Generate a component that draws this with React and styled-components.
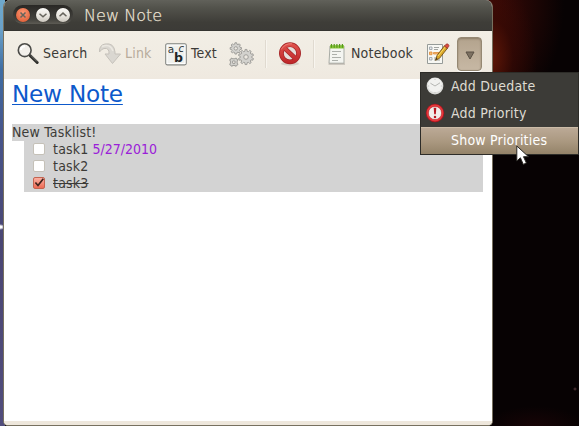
import React from 'react';
import styled, { createGlobalStyle, css } from 'styled-components';

const Global = createGlobalStyle`
  * { box-sizing: border-box; }
  body {
    margin: 0;
    overflow: hidden;
    font-family: "DejaVu Sans Condensed", "DejaVu Sans", sans-serif;
    font-stretch: 90%;
    font-size: 14px;
    letter-spacing: 0.2px;
    color: #3c3b37;
  }
`;

const Desktop = styled.div`
  position: relative;
  width: 579px;
  height: 426px;
  overflow: hidden;
  padding-left: 3px;
  background:
    radial-gradient(ellipse 5px 3px at 0 227px, #fff 0 35%, transparent),
    radial-gradient(circle 2px at 575px 389px, #5c3c40, transparent),
    linear-gradient(#6fa9cc, #6aa0c8 30px, #3f6da3 70px, #47568c 130px, #4a4673 240px, #514d7c) 0 0 / 5px 426px no-repeat,
    radial-gradient(ellipse 48px 80px at 489px 58px, #641807, rgba(60, 10, 4, 0.55) 50%, transparent),
    radial-gradient(ellipse 72px 110px at 492px 5px, #3d0a06, rgba(40, 7, 5, 0.8) 50%, transparent),
    radial-gradient(ellipse 50px 20px at 535px 426px, #170406, transparent),
    #070203;
`;

const Window = styled.div`
  width: 490px;
  height: 426px;
  display: flex;
  flex-direction: column;
  border: solid #77705f;
  border-width: 0 1px 1px;
  border-radius: 7px 7px 5px 5px;
  overflow: hidden;
  background: #f0ebe2;
`;

const TitleBar = styled.header`
  flex: 0 0 31px;
  display: flex;
  align-items: center;
  gap: 11px;
  padding: 0 0 1px 9px;
  background: linear-gradient(#61615a, #53534c 25%, #3e3d38 75%, #3c3b37);
  border-bottom: 1px solid #353430;
`;

const WindowButtons = styled.div`
  display: flex;
  align-items: center;
  gap: 6px;
  width: 60px;
  height: 19px;
  padding: 0 3px;
  border-radius: 10px;
  background: linear-gradient(#292825, #44433e 75%, #5d5b54);
`;

const RoundButton = styled.button`
  width: 14px;
  height: 14px;
  flex: none;
  padding: 0;
  border: 0;
  border-radius: 50%;
  display: grid;
  place-items: center;
  background: ${p => p.$close ? 'radial-gradient(circle at 50% 35%, #ff9875, #e66c45 65%, #d6532c)' : 'linear-gradient(#fbfaf7, #e6e3dc 60%, #cbc7be)'};
  box-shadow: 0 0 1px #151410;
`;

const WindowTitle = styled.div`
  font: 300 16px/24px "DejaVu Sans Light", "DejaVu Sans", sans-serif;
  font-stretch: 100%;
  letter-spacing: 0.05px;
  color: #f1ebdc;
  padding-top: 3px;
  -webkit-text-stroke: 0.25px #e3dccb;
`;

const Toolbar = styled.nav`
  flex: 0 0 48px;
  display: flex;
  align-items: center;
  padding-bottom: 2px;
  background: linear-gradient(#f2eee5, #f0ebe2 70%, #efe9e0);
`;

const Tool = styled.div`
  flex: 0 0 ${p => p.$width}px;
  display: flex;
  align-items: center;
  gap: ${p => p.$gap || 4}px;
  white-space: nowrap;
  color: ${p => p.$disabled ? '#b7ab9b' : '#3c3b37'};
  svg { flex: none; }
`;

const ToolLabel = styled.span`
  padding-bottom: 2px;
`;

const IconInset = styled.span`
  display: flex;
  margin-left: ${p => p.$left || 12}px;
`;

const Separator = styled.div`
  flex: 0 0 2px;
  height: 28px;
  border-left: 1px solid #e0dad0;
  border-right: 1px solid #f8f5ef;
`;

const DropButton = styled.button`
  flex: 0 0 25px;
  height: 34px;
  padding: 2px 0 0 1px;
  border: 1px solid #958873;
  border-radius: 4px;
  display: grid;
  place-items: center;
  background: linear-gradient(#b3a38d, #c5b6a2 90%);
  box-shadow: inset 0 1px 2px #8c7d68, 0 1px #fff;
`;

const Editor = styled.main`
  flex: 1;
  background: #fff;
  padding: 0 8px;
`;

const BottomEdge = styled.footer`
  flex: 0 0 4px;
  background: #eee7dc;
`;

const Heading = styled.h1`
  width: max-content;
  height: 45px;
  margin: 0;
  font-family: "DejaVu Sans", sans-serif;
  font-stretch: 100%;
  font-weight: 400;
  font-size: 23.2px;
  letter-spacing: -0.25px;
  line-height: 29px;
  color: #0d59cb;
  text-decoration: underline;
  text-decoration-thickness: 1px;
  text-underline-offset: 2px;
  text-decoration-skip-ink: none;
`;

const ListTitle = styled.div`
  width: 471px;
  height: 17px;
  line-height: 16px;
  background: #d3d3d3;
`;

const TaskList = styled.ul`
  list-style: none;
  margin: 0 0 0 12px;
  padding: 0;
  width: 459px;
  background: #d3d3d3;
`;

const Task = styled.li`
  display: flex;
  align-items: center;
  height: 17px;
  padding-left: 9px;
  line-height: 17px;
`;

const Check = styled.div`
  width: 12px;
  height: 12px;
  margin: -2px 8px 0 0;
  border: 1px solid ${p => p.$checked ? '#c46450' : '#c5c1b8'};
  border-radius: 2px;
  background: ${p => p.$checked ? 'linear-gradient(#fbb0a2, #ee6b55)' : '#fff'};
  svg { display: block; overflow: visible; }
`;

const TaskText = styled.span`
  text-decoration: ${p => p.$done ? 'line-through' : 'none'};
`;

const DueDate = styled.span`
  margin-left: 4px;
  color: #9a20d8;
  letter-spacing: 0;
`;

const Menu = styled.div`
  position: absolute;
  left: 420px;
  top: 72px;
  width: 159px;
  height: 83px;
  border: 1px solid #2d2c28;
  background: #3c3b37;
`;

const MenuItem = styled.div`
  height: 27px;
  display: grid;
  grid-template-columns: 30px 1fr;
  align-items: center;
  line-height: 18px;
  padding-bottom: 1px;
  color: #dfdbd2;
  svg { margin-left: 4px; }
  ${p => p.$active && css`
    color: #fff;
    background: linear-gradient(#bba996, #ab9981 50%, #948369);
    border-top: 1px solid #cbbba7;
    padding-bottom: 2px;
  `}
`;

const Pointer = styled.svg`
  position: absolute;
  left: 516px;
  top: 145px;
`;

const SearchIcon = () => (
  <svg width="24" height="24" viewBox="0 0 24 24">
    <path d="M14 13.5L21.2 20.5" stroke="#30302d" strokeWidth="3" strokeLinecap="round" />
    <path d="M15 13.5L21 19.5" stroke="#898984" strokeWidth=".8" />
    <circle cx="8.7" cy="8.2" r="6.4" fill="#f2efea" stroke="#4b4b48" strokeWidth="1.6" />
    <path d="M5 8Q5 4.5 9 4.2" fill="none" stroke="#fff" strokeWidth="2" />
  </svg>
);

const LinkIcon = () => (
  <svg width="24" height="24" viewBox="0 0 24 24">
    <path d="M1.5 10Q1 3 7 2Q16 .5 17 10L17 12H22.5L14.5 21.5L7 12H11Q11.5 5.5 6 6.5Q3.5 7 1.5 10Z" fill="#dad7d1" stroke="#c5c1ba" />
    <path d="M4 4.5Q12 1 15 9" fill="none" stroke="#ebe8e1" strokeWidth="1.5" />
  </svg>
);

const FontIcon = () => (
  <svg width="22" height="23" viewBox="0 0 22 23">
    <rect x=".8" y=".8" width="20.4" height="21" rx="1.5" fill="#eff0ed" stroke="#7f827e" strokeWidth="1.2" />
    <rect x="2" y="2" width="18" height="18.6" fill="none" stroke="#fff" />
    <g letterSpacing="0" fontFamily="DejaVu Sans">
      <text x="2.8" y="10" fontSize="10.5" fill="#30383a">a</text>
      <text x="13.6" y="9" fontSize="10" fontStyle="italic" fill="#30383a">c</text>
      <text x="8.9" y="19" fontSize="12.5" fontWeight="700" fill="#202527">b</text>
    </g>
  </svg>
);

const gearOutline = (r, depth, teeth) => {
  const points = [];
  for (let i = 0; i < teeth; i++) {
    [[-.32, r - depth], [-.19, r], [.19, r], [.32, r - depth]].forEach(([offset, radius]) => {
      const angle = ((i + offset) / teeth) * Math.PI * 2;
      points.push(`${(radius * Math.sin(angle)).toFixed(2)},${(-radius * Math.cos(angle)).toFixed(2)}`);
    });
  }
  return points.join(' ');
};

const Gear = ({ x, y, r, teeth, turn = 0 }) => (
  <g transform={`translate(${x} ${y}) rotate(${turn})`} stroke="#a09f9b">
    <polygon points={gearOutline(r, r * .24, teeth)} fill="#d3d2ce" strokeWidth="1" strokeLinejoin="round" />
    <circle r={r * .3} fill="#ece8e1" strokeWidth="1" />
  </g>
);

const GearsIcon = () => (
  <svg width="25" height="25" viewBox="0 0 25 25">
    <Gear x={6.8} y={6.4} r={5.7} teeth={8} />
    <Gear x={17} y={15} r={7.6} teeth={10} />
    <Gear x={4.8} y={20.2} r={4.6} teeth={4} turn={45} />
  </svg>
);

const ProhibitIcon = () => (
  <svg width="24" height="24" viewBox="0 0 24 24">
    <defs>
      <linearGradient id="ring" x1="0" y1="0" x2="0" y2="22" gradientUnits="userSpaceOnUse">
        <stop stopColor="#e2554f" /><stop offset="1" stopColor="#bd2427" />
      </linearGradient>
    </defs>
    <ellipse cx="12" cy="21.7" rx="9" ry="2" fill="#c4beb4" opacity=".6" />
    <circle cx="12" cy="11.3" r="8.6" fill="#e6deda" stroke="#a42427" strokeWidth="4.8" />
    <path d="M6 5.6L18 17" stroke="#a72528" strokeWidth="4.6" />
    <circle cx="12" cy="11.3" r="8.6" fill="none" stroke="url(#ring)" strokeWidth="3.4" />
    <path d="M6 5.6L18 17" stroke="url(#ring)" strokeWidth="3.2" />
    <path d="M3.2 7.5Q7 1.2 14 1.8" fill="none" stroke="#ee8a83" strokeWidth=".8" />
  </svg>
);

const NotebookIcon = () => (
  <svg width="18" height="22" viewBox="0 0 18 22">
    <path d="M2 3H16V20.2H1Z" fill="#f4f5f1" stroke="#a8aba5" />
    <path d="M2 2.2H16V5.6H2Z" fill="#8cc63c" />
    <path d="M3.5 1V4.8M6.2 1V4.8M8.9 1V4.8M11.6 1V4.8M14.4 1V4.8" stroke="#559a18" strokeWidth="1.2" />
    <path d="M4 8.5H13M4 11.5H9M4 14.5H13M4 17.5H10" stroke="#adb0ab" />
    <path d="M.5 21H17" stroke="#aaa69e" />
  </svg>
);

const TasksIcon = () => (
  <svg width="24" height="24" viewBox="0 0 24 24">
    <path d="M1.5 2.5H16.5V21.5H1.5Z" fill="#f7f7f3" stroke="#969b98" />
    <path d="M3.5 5H6V7.5H3.5ZM3.5 15.5H6V18H3.5Z" fill="#e9ebed" stroke="#959da3" strokeWidth=".8" />
    <path d="M3.5 10H6V12.7H3.5ZM7.5 10.5H13.5V12H7.5Z" fill="#f6ba72" stroke="#df8b38" strokeWidth=".8" />
    <path d="M8 5.5H13M8 7.5H12M8 16H12M8 18H14" stroke="#a3a5a2" />
    <path d="M9.5 18.3L11 13.5L18.5 3.7L21.6 6L13.5 16.3Z" fill="#dba728" stroke="#745016" strokeWidth=".9" />
    <path d="M12 14L19.6 4.6" stroke="#f8dc67" />
    <path d="M18.5 4.2L20.2 2.2Q21 1.4 22.3 2.4Q23.4 3.5 22.7 4.5L21.3 6.3Z" fill="#db4c3f" stroke="#942e28" strokeWidth=".7" />
    <path d="M9.5 18.3L10.3 15.5L11.5 16.9Z" fill="#3d3525" />
  </svg>
);

const ClockIcon = () => (
  <svg width="20" height="20" viewBox="0 0 20 20">
    <circle cx="10" cy="10" r="8.4" fill="#dcdcd9" />
    <circle cx="10" cy="9.2" r="7.2" fill="#f1f1ef" />
    <path d="M5.4 7.2L10 10L15 6.8" fill="none" stroke="#aeafac" strokeWidth=".9" />
    <path d="M10 2.8V4M10 16V17.2M3 10H4.2M15.8 10H17" stroke="#a9a9a6" strokeWidth=".6" />
  </svg>
);

const PriorityIcon = () => (
  <svg width="20" height="20" viewBox="0 0 20 20">
    <circle cx="10" cy="10" r="9.2" fill="#a91620" />
    <circle cx="10" cy="10" r="8.4" fill="#e7383b" />
    <circle cx="10" cy="10" r="6.6" fill="#f1eeeb" stroke="#b4272b" strokeWidth=".6" />
    <path d="M8.7 4.8H11.3L10.8 11.3H9.2Z" fill="#b61820" />
    <circle cx="10" cy="14" r="1.25" fill="#b61820" />
  </svg>
);

const Tick = () => (
  <svg width="10" height="10" viewBox="0 0 10 10">
    <path d="M1.4 4.5L4 7.5L9.3 .8" fill="none" stroke="#40231c" strokeWidth="1.7" />
  </svg>
);

const WindowGlyph = ({ d }) => (
  <svg width="10" height="10" viewBox="0 0 10 10"><path d={d} fill="none" stroke="#66645c" strokeWidth="1.5" /></svg>
);

export default function App() {
  return (
    <>
      <Global />
      <Desktop>
        <Window>
          <TitleBar>
            <WindowButtons>
              <RoundButton $close aria-label="Close"><WindowGlyph d="M2.5 2.5L7.5 7.5M7.5 2.5L2.5 7.5" /></RoundButton>
              <RoundButton aria-label="Minimize"><WindowGlyph d="M1.5 3.7L5 6.8L8.5 3.7" /></RoundButton>
              <RoundButton aria-label="Maximize"><WindowGlyph d="M1.5 6.2L5 3.1L8.5 6.2" /></RoundButton>
            </WindowButtons>
            <WindowTitle>New Note</WindowTitle>
          </TitleBar>
          <Toolbar>
            <Tool $width={94} $gap={3}><IconInset><SearchIcon /></IconInset><ToolLabel>Search</ToolLabel></Tool>
            <Tool $width={67} $disabled $gap={3}><LinkIcon /><ToolLabel>Link</ToolLabel></Tool>
            <Tool $width={64}><FontIcon /><ToolLabel>Text</ToolLabel></Tool>
            <Tool $width={36}><GearsIcon /></Tool>
            <Separator />
            <Tool $width={46}><IconInset $left={11}><ProhibitIcon /></IconInset></Tool>
            <Separator />
            <Tool $width={111} $gap={5}><IconInset $left={13}><NotebookIcon /></IconInset><ToolLabel>Notebook</ToolLabel></Tool>
            <Tool $width={31}><TasksIcon /></Tool>
            <DropButton aria-label="Task actions">
              <svg width="10" height="9" viewBox="0 0 10 9"><path d="M1 1H9L5 8Z" fill="#7d7162" stroke="#5a5145" /></svg>
            </DropButton>
          </Toolbar>
          <Editor>
            <Heading>New Note</Heading>
            <ListTitle>New Tasklist!</ListTitle>
            <TaskList>
              <Task><Check /><TaskText>task1</TaskText><DueDate>5/27/2010</DueDate></Task>
              <Task><Check /><TaskText>task2</TaskText></Task>
              <Task><Check $checked><Tick /></Check><TaskText $done>task3</TaskText></Task>
            </TaskList>
          </Editor>
          <BottomEdge />
        </Window>
        <Menu>
          <MenuItem><ClockIcon />Add Duedate</MenuItem>
          <MenuItem><PriorityIcon />Add Priority</MenuItem>
          <MenuItem $active><span />Show Priorities</MenuItem>
        </Menu>
        <Pointer width="14" height="21" viewBox="0 0 14 21">
          <path d="M.8 1V16L4.4 12.8L7.3 19.4L10.4 18L7.5 11.7H12.5Z" fill="#fff" stroke="#292723" strokeWidth="1" />
        </Pointer>
      </Desktop>
    </>
  );
}
